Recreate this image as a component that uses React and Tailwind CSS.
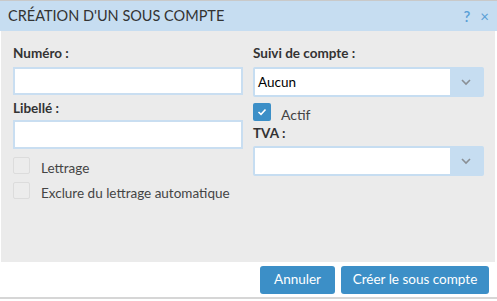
import React from 'react';

const Chevron = () => (
  <svg width="12" height="8" viewBox="0 0 12 8" fill="none">
    <path d="M2 2 L6 6 L10 2" stroke="#8a8f95" strokeWidth="1.6" />
  </svg>
);

const Select = ({ value }) => (
  <div className="flex h-[30px] w-[231px] rounded-[2px] bg-[#c6ddf1] p-[2px]">
    <div className="flex flex-1 items-center bg-white pl-[3px] text-[13.5px] text-black">{value}</div>
    <div className="flex w-[32px] items-center justify-center">
      <Chevron />
    </div>
  </div>
);

const Box = () => (
  <div className="h-[17px] w-[17px] shrink-0 rounded-[2px] border border-[#dcdcdc] bg-[#ececec]" />
);

export default function App() {
  return (
    <div
      className="flex h-[301px] w-[497px] flex-col bg-white text-[#333]"
      style={{ fontFamily: 'Lato, "Open Sans", sans-serif' }}
    >
      {/* header */}
      <div className="flex h-[31px] items-center justify-between border-t border-[#c9c9c9] bg-[#c6ddf1] pl-[8px] pr-[8px]">
        <h1 className="text-[14.5px] leading-none text-[#333]">CRÉATION D'UN SOUS COMPTE</h1>
        <div className="flex items-center gap-[10px] text-[#5a9fd6]">
          <span className="text-[15px] font-semibold">?</span>
          <span className="text-[15px]">×</span>
        </div>
      </div>

      {/* body */}
      <div className="ml-[1px] mr-[2px] grid h-[231px] grid-cols-[240px_1fr] bg-[#ebebeb] pl-[12px] pt-[13px]">
        <div className="flex flex-col">
          <label className="h-[18px] text-[13.5px] font-bold leading-[18px]">Numéro :</label>
          <div className="mt-[5px] h-[28px] w-[230px] border-2 border-[#c9def1] bg-white" />
          <label className="mt-[4px] h-[18px] text-[13.5px] font-bold leading-[18px]">Libellé :</label>
          <div className="mt-[3px] h-[29px] w-[230px] border-2 border-[#c9def1] bg-white" />
          <div className="mt-[8px] flex h-[17px] items-start">
            <Box />
            <span className="ml-[11px] pt-[2px] text-[13.5px] leading-[18px] text-[#444]">Lettrage</span>
          </div>
          <div className="mt-[8px] flex h-[17px] items-start">
            <Box />
            <span className="ml-[11px] pt-[2px] text-[13.5px] leading-[18px] text-[#444]">Exclure du lettrage automatique</span>
          </div>
        </div>
        <div className="flex flex-col">
          <label className="h-[18px] text-[13.5px] font-bold leading-[18px]">Suivi de compte :</label>
          <div className="mt-[5px]">
            <Select value="Aucun" />
          </div>
          <div className="mt-[6px] flex h-[18px] items-start">
            <div className="flex h-[18px] w-[18px] shrink-0 items-center justify-center rounded-[2px] bg-[#3c8fc7]">
              <svg width="10" height="8" viewBox="0 0 10 8" fill="none">
                <path d="M1.5 4 L4 6.3 L8.5 1.5" stroke="white" strokeWidth="1.6" />
              </svg>
            </div>
            <span className="ml-[10px] pt-[3px] text-[14px] leading-[18px] text-[#444]">Actif</span>
          </div>
          <label className="mt-[3px] h-[18px] text-[13.5px] font-bold leading-[18px]">TVA :</label>
          <div className="mt-[4px]">
            <Select value="" />
          </div>
        </div>
      </div>

      {/* footer */}
      <div className="flex h-[37px] items-center justify-end gap-[6px] border-b-2 border-[#d6d6d6] pr-[8px]">
        <button className="h-[28px] w-[75px] rounded-[3px] bg-[#3c8fc7] text-[13.5px] text-white">Annuler</button>
        <button className="h-[28px] w-[148px] rounded-[3px] bg-[#3c8fc7] text-[13.5px] text-white">Créer le sous compte</button>
      </div>
    </div>
  );
}
